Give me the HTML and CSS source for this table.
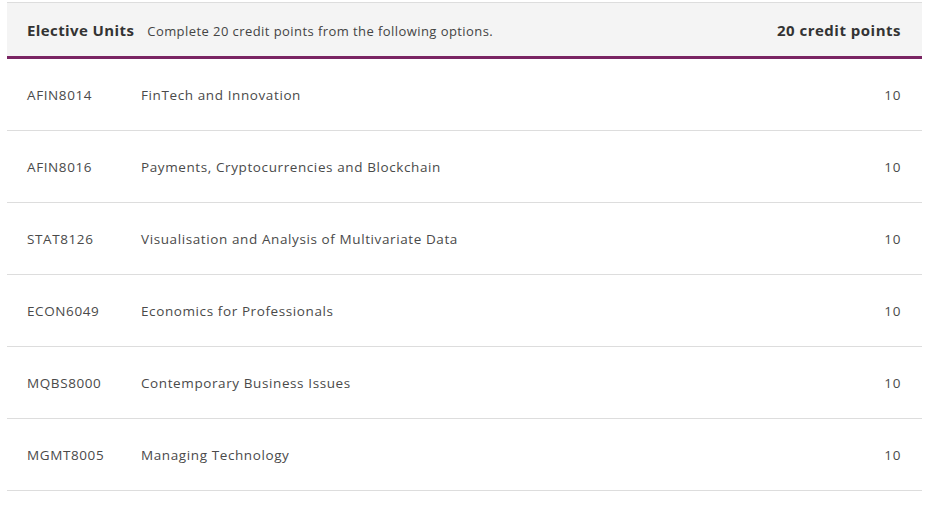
FILE: index.html
```html
<!DOCTYPE html>
<html>
<head>
<meta charset="utf-8">
<link rel="stylesheet" href="styles.css">
</head>
<body>
<div class="units">
  <div class="units-head">
    <div class="head-left">
      <span class="head-title">Elective Units</span>
      <span class="head-desc">Complete 20 credit points from the following options.</span>
    </div>
    <span class="head-credits">20 credit points</span>
  </div>
  <div class="unit-row"><span class="code">AFIN8014</span><span class="name">FinTech and Innovation</span><span class="cp">10</span></div>
  <div class="unit-row"><span class="code">AFIN8016</span><span class="name">Payments, Cryptocurrencies and Blockchain</span><span class="cp">10</span></div>
  <div class="unit-row"><span class="code">STAT8126</span><span class="name">Visualisation and Analysis of Multivariate Data</span><span class="cp">10</span></div>
  <div class="unit-row"><span class="code">ECON6049</span><span class="name">Economics for Professionals</span><span class="cp">10</span></div>
  <div class="unit-row"><span class="code">MQBS8000</span><span class="name">Contemporary Business Issues</span><span class="cp">10</span></div>
  <div class="unit-row"><span class="code">MGMT8005</span><span class="name">Managing Technology</span><span class="cp">10</span></div>
</div>
</body>
</html>
```

FILE: styles.css
```css
html, body {
  margin: 0;
  padding: 0;
  background: #ffffff;
}
body {
  padding: 2px 10px 0 7px;
  font-family: "Open Sans", "Liberation Sans", sans-serif;
  color: #444444;
}
.units {
  border-top: 1px solid #dddddd;
}
.units-head {
  display: flex;
  align-items: center;
  justify-content: space-between;
  height: 53px;
  padding: 0 21px 0 20px;
  background: #f4f4f4;
  border-bottom: 3px solid #7a2463;
}
.head-left {
  display: flex;
  align-items: baseline;
  gap: 13px;
}
.head-title {
  font-size: 15px;
  font-weight: 700;
  letter-spacing: 0.4px;
  color: #333333;
}
.head-desc {
  font-size: 13px;
  letter-spacing: 0.43px;
  color: #444444;
}
.head-credits {
  font-size: 15px;
  font-weight: 700;
  letter-spacing: 0.5px;
  color: #333333;
}
.unit-row {
  display: flex;
  align-items: center;
  height: 71px;
  padding: 0 21px 0 20px;
  border-bottom: 1px solid #dddddd;
  font-size: 13.5px;
  letter-spacing: 0.6px;
  color: #4a4a4a;
}
.code {
  width: 114px;
  flex: none;
}
.name {
  flex: 1;
}
.cp {
  flex: none;
  text-align: right;
}
```
